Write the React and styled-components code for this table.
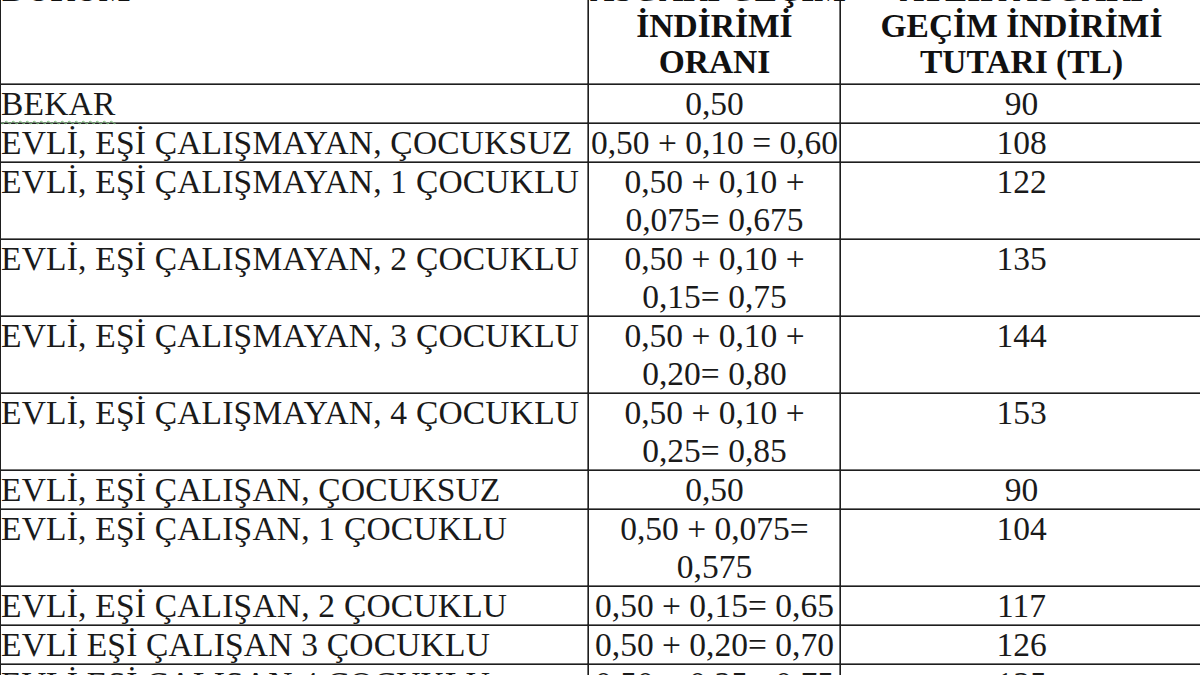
import React from "react";
import styled, { createGlobalStyle } from "styled-components";

const GlobalStyle = createGlobalStyle`
  html, body {
    margin: 0;
    padding: 0;
    background: #ffffff;
    overflow: hidden;
  }
  body {
    width: 1200px;
    height: 675px;
  }
`;

const Viewport = styled.div`
  width: 1200px;
  height: 675px;
  overflow: hidden;
  background: #fff;
`;

const Table = styled.table`
  margin-top: -28px;
  border-collapse: separate;
  border-spacing: 0;
  table-layout: fixed;
  width: 1203px;
  border-left: 1px solid #1e1e1e;
  font-family: "Liberation Serif", "Times New Roman", serif;
  font-size: 33.5px;
  color: #1a1a1a;
`;

const Col = styled.col`
  width: ${(p) => p.$w}px;
`;

const cellBase = `
  box-sizing: border-box;
  padding: 0 1px;
  border-right: 1px solid #1e1e1e;
  border-bottom: 1px solid #1e1e1e;
  box-shadow: inset -1px 0 0 rgba(0,0,0,0.55), inset 0 -1px 0 rgba(0,0,0,0.55);
  vertical-align: top;
`;

const HeadCell = styled.th`
  ${cellBase}
  font-weight: bold;
  line-height: 36px;
  padding-bottom: 4px;
  color: #111;
  text-align: ${(p) => p.$align || "center"};
  white-space: nowrap;
`;

const Cell = styled.td`
  ${cellBase}
  line-height: 38px;
  text-align: ${(p) => p.$align || "center"};
  padding-left: ${(p) => (p.$align === "left" ? "0px" : "1px")};
  letter-spacing: ${(p) => (p.$align === "left" ? "0.2px" : "0")};
`;

const Spell = styled.span`
  text-decoration: underline wavy #7cc47c;
  text-decoration-thickness: 1px;
  text-underline-offset: 5px;
`;

const rows = [
  { label: "BEKAR", rate: "0,50", amount: "90", spell: true },
  { label: "EVLİ, EŞİ ÇALIŞMAYAN, ÇOCUKSUZ", rate: "0,50 + 0,10 = 0,60", amount: "108" },
  { label: "EVLİ, EŞİ ÇALIŞMAYAN, 1 ÇOCUKLU", rate: "0,50 + 0,10 + 0,075= 0,675", amount: "122" },
  { label: "EVLİ, EŞİ ÇALIŞMAYAN, 2 ÇOCUKLU", rate: "0,50 + 0,10 + 0,15= 0,75", amount: "135" },
  { label: "EVLİ, EŞİ ÇALIŞMAYAN, 3 ÇOCUKLU", rate: "0,50 + 0,10 + 0,20= 0,80", amount: "144" },
  { label: "EVLİ, EŞİ ÇALIŞMAYAN, 4 ÇOCUKLU", rate: "0,50 + 0,10 + 0,25= 0,85", amount: "153" },
  { label: "EVLİ, EŞİ ÇALIŞAN, ÇOCUKSUZ", rate: "0,50", amount: "90" },
  { label: "EVLİ, EŞİ ÇALIŞAN, 1 ÇOCUKLU", rate: "0,50 + 0,075= 0,575", amount: "104" },
  { label: "EVLİ, EŞİ ÇALIŞAN, 2 ÇOCUKLU", rate: "0,50 + 0,15= 0,65", amount: "117" },
  { label: "EVLİ EŞİ ÇALIŞAN 3 ÇOCUKLU", rate: "0,50 + 0,20= 0,70", amount: "126" },
  { label: "EVLİ EŞİ ÇALIŞAN 4 ÇOCUKLU", rate: "0,50 + 0,25= 0,75", amount: "135" },
];

export default function App() {
  return (
    <Viewport>
      <GlobalStyle />
      <Table>
        <colgroup>
          <Col $w={588} />
          <Col $w={252} />
          <Col $w={362} />
        </colgroup>
        <thead>
          <tr>
            <HeadCell $align="left">DURUM</HeadCell>
            <HeadCell>
              ASGARİ GEÇİM
              <br />
              İNDİRİMİ
              <br />
              ORANI
            </HeadCell>
            <HeadCell>
              AYLIK ASGARİ
              <br />
              GEÇİM İNDİRİMİ
              <br />
              TUTARI (TL)
            </HeadCell>
          </tr>
        </thead>
        <tbody>
          {rows.map((r) => (
            <tr key={r.label}>
              <Cell $align="left">{r.spell ? <Spell>{r.label}</Spell> : r.label}</Cell>
              <Cell>{r.rate}</Cell>
              <Cell>{r.amount}</Cell>
            </tr>
          ))}
        </tbody>
      </Table>
    </Viewport>
  );
}
